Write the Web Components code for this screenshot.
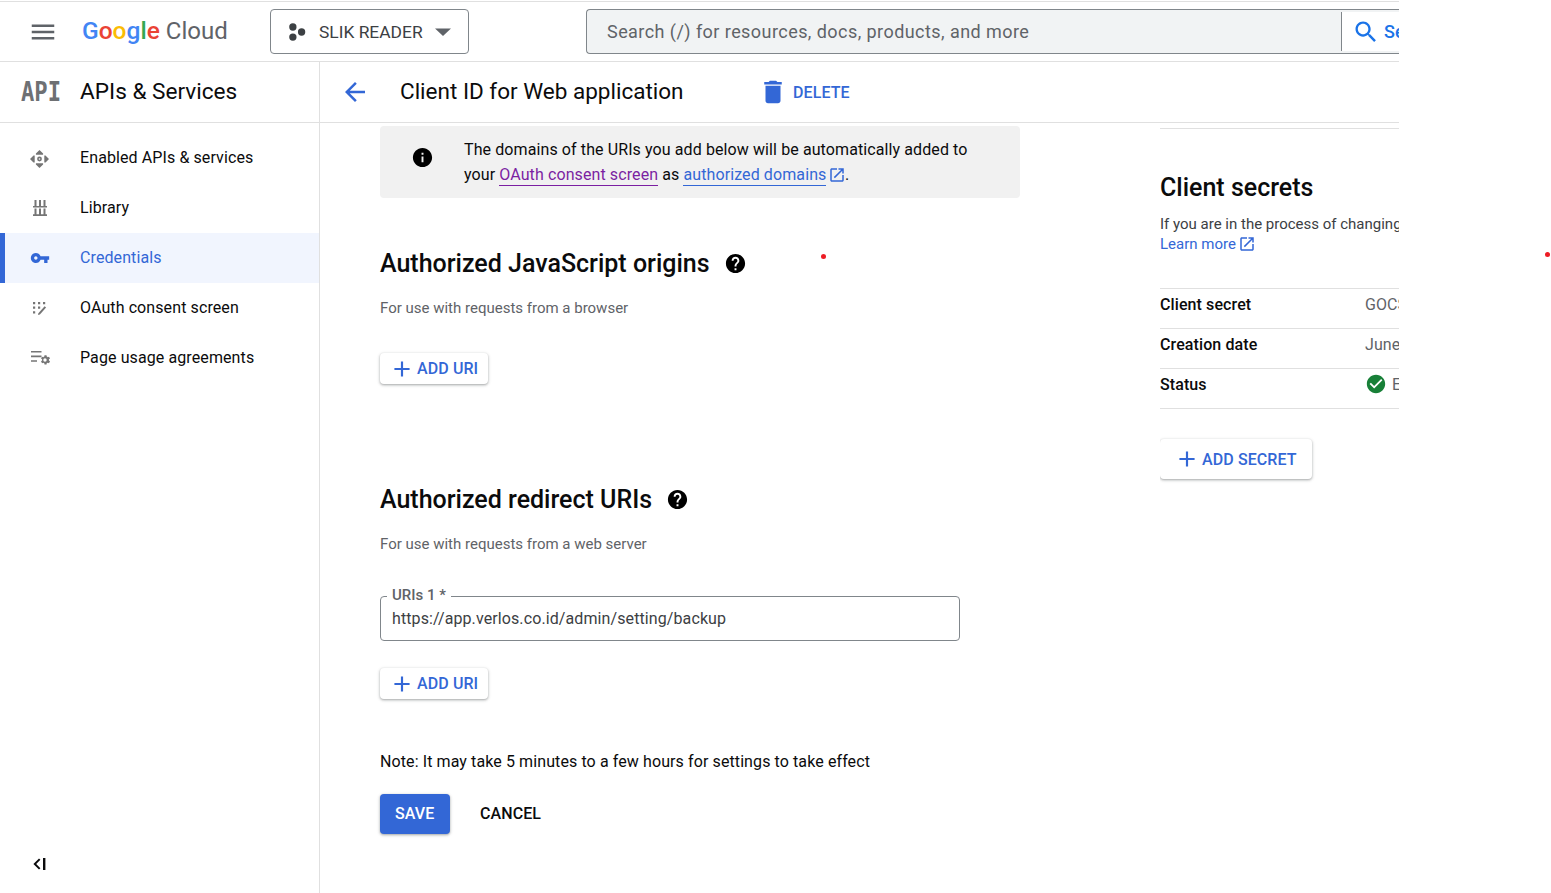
<!DOCTYPE html>
<html lang="en">
<head>
<meta charset="utf-8">
<title>Client ID for Web application</title>
<style>
  html, body { margin: 0; padding: 0; background: #fff; height: 100%; overflow: hidden; }
  body { font-family: Roboto, "Liberation Sans", sans-serif; color: #0b0b0c; }
</style>
</head>
<body>
<gc-app>
  <gc-header slot="header"></gc-header>
  <gc-sidenav slot="nav">
    <gc-nav-item icon="apis" label="Enabled APIs &amp; services"></gc-nav-item>
    <gc-nav-item icon="library" label="Library"></gc-nav-item>
    <gc-nav-item icon="key" label="Credentials" active></gc-nav-item>
    <gc-nav-item icon="consent" label="OAuth consent screen"></gc-nav-item>
    <gc-nav-item icon="usage" label="Page usage agreements"></gc-nav-item>
  </gc-sidenav>
  <gc-pagebar slot="bar"></gc-pagebar>
  <gc-form slot="form"></gc-form>
  <gc-secrets slot="secrets"></gc-secrets>
</gc-app>
<gc-dot style="left:821px;top:254px"></gc-dot>
<gc-dot style="left:1545px;top:252px"></gc-dot>

<script>
const ICONS = {
  menu: '<path d="M3 18h18v-2H3v2zm0-5h18v-2H3v2zm0-7v2h18V6H3z"/>',
  back: '<path d="M20 11H7.83l5.59-5.59L12 4l-8 8 8 8 1.41-1.41L7.83 13H20v-2z"/>',
  trash: '<path d="M6 19c0 1.1.9 2 2 2h8c1.1 0 2-.9 2-2V7H6v12zM19 4h-3.5l-1-1h-5l-1 1H5v2h14V4z"/>',
  info: '<path d="M12 2C6.48 2 2 6.48 2 12s4.48 10 10 10 10-4.48 10-10S17.52 2 12 2zm1 15h-2v-6h2v6zm0-8h-2V7h2v2z"/>',
  help: '<path d="M12 2C6.48 2 2 6.48 2 12s4.48 10 10 10 10-4.48 10-10S17.52 2 12 2zm1 17h-2v-2h2v2zm2.07-7.75l-.9.92C13.45 12.9 13 13.5 13 15h-2v-.5c0-1.1.45-2.1 1.17-2.83l1.24-1.26c.37-.36.59-.86.59-1.41 0-1.1-.9-2-2-2s-2 .9-2 2H8c0-2.21 1.79-4 4-4s4 1.79 4 4c0 .88-.36 1.68-.93 2.25z"/>',
  add: '<path d="M19 13h-6v6h-2v-6H5v-2h6V5h2v6h6v2z"/>',
  open: '<path d="M19 19H5V5h7V3H5c-1.11 0-2 .9-2 2v14c0 1.1.89 2 2 2h14c1.1 0 2-.9 2-2v-7h-2v7zM14 3v2h3.59l-9.83 9.83 1.41 1.41L19 6.41V10h2V3h-7z"/>',
  check: '<path d="M12 2C6.48 2 2 6.48 2 12s4.48 10 10 10 10-4.48 10-10S17.52 2 12 2zm-2 15l-5-5 1.41-1.41L10 14.17l7.59-7.59L19 8l-9 9z"/>',
  search: '<path d="M15.5 14h-.79l-.28-.27C15.41 12.59 16 11.11 16 9.5 16 5.91 13.09 3 9.5 3S3 5.91 3 9.5 5.91 16 9.5 16c1.61 0 3.09-.59 4.23-1.57l.27.28v.79l5 4.99L20.49 19l-4.99-5zm-6 0C7.01 14 5 11.99 5 9.5S7.01 5 9.5 5 14 7.01 14 9.5 11.99 14 9.5 14z"/>',
  key: '<path d="M12.65 10C11.83 7.67 9.61 6 7 6c-3.31 0-6 2.69-6 6s2.69 6 6 6c2.61 0 4.83-1.67 5.65-4H17v4h4v-4h2v-4H12.65zM7 14c-1.1 0-2-.9-2-2s.9-2 2-2 2 .9 2 2-.9 2-2 2z"/>',
  drop: '<path d="M4 8.5l8 7.5 8-7.5z"/>',
  project: '<circle cx="7.5" cy="6.5" r="4"/><circle cx="7.5" cy="17.5" r="4"/><circle cx="17" cy="12" r="4"/>',
  apis: '<path d="M11.5 4l3.6 3.5v1.2H7.9V7.5zM11.5 22l-3.6-3.5v-1.2h7.2v1.2zM2 13l3.5-3.6h1.2v7.2H5.5zM21 13l-3.5 3.6h-1.2V9.4h1.2z"/><path fill-rule="evenodd" d="M11.5 10.6a2.4 2.4 0 1 0 0 4.8 2.4 2.4 0 0 0 0-4.8zm0 1.6a.8.8 0 1 1 0 1.6.8.8 0 0 1 0-1.6z"/>',
  library: '<path d="M6.5 4h2v6h-2zM11 4h2v6h-2zM15.5 4h2v6h-2zM5 10h14v1.6H5zM6.5 12.4h2v6h-2zM11 12.4h2v6h-2zM15.5 12.4h2v6h-2zM5 18.2h14V20H5z"/>',
  consent: '<path d="M5 6h2.2v2.2H5zM10 6h2.2v2.2H10zM15 6h2.2v2.2H15zM5 10.6h2.2v2.2H5zM10 10.6h2.2v2.2H10zM5 15.2h2.2v2.2H5z"/><path d="M10.4 17.2l6.2-7 1.5 1.3-6.2 7-1.9.4z"/>',
  usage: '<path d="M3 5h10.5v1.6H3zM3 9.6h10.5v1.6H3zM3 14.2h6v1.6H3z"/><g transform="translate(2.55,-.45) scale(.85)"><path d="M21.6 17.6l1.3 1-1.2 2.1-1.5-.6a5 5 0 0 1-1.2.7l-.2 1.6h-2.4l-.2-1.6a5 5 0 0 1-1.2-.7l-1.5.6-1.2-2.1 1.3-1a5 5 0 0 1 0-1.4l-1.3-1 1.2-2.1 1.5.6a5 5 0 0 1 1.2-.7l.2-1.6h2.4l.2 1.6a5 5 0 0 1 1.2.7l1.5-.6 1.2 2.1-1.3 1a5 5 0 0 1 0 1.4zM17 15a2 2 0 1 0 0 4 2 2 0 0 0 0-4z"/></g>',
  collapse: '<path d="M13 6.4L7.4 12l5.6 5.6 1.4-1.4-4.2-4.2 4.2-4.2zM17 6h2.4v12H17z"/>'
};

function define(name, css, html, render) {
  customElements.define(name, class extends HTMLElement {
    constructor() {
      super();
      this.attachShadow({ mode: "open" });
    }
    connectedCallback() {
      this.shadowRoot.innerHTML = "<style>" + css + "</style>" + (render ? render(this) : html);
    }
  });
}

define("gc-icon", `
  :host { display: inline-flex; flex: none; width: var(--size, 24px); height: var(--size, 24px); color: inherit; }
  svg { width: 100%; height: 100%; fill: currentColor; display: block; }
`, "", el => `<svg viewBox="0 0 24 24" aria-hidden="true">${ICONS[el.getAttribute("name")] || ""}</svg>`);

define("gc-dot", `
  :host { position: absolute; display: block; width: 5px; height: 5px; border-radius: 50%; background: #ed1c24; }
`, "");

define("gc-app", `
  :host { display: flex; flex-direction: column; width: 1399px; height: 892px; margin-top: 1px; border-top: 1px solid #e0e0e0; box-sizing: border-box; overflow: hidden; background: #fff; }
  .top { flex: none; }
  .body { flex: 1; display: flex; min-height: 0; }
  .nav { flex: none; width: 320px; display: flex; }
  .pane { flex: 1; min-width: 0; display: flex; flex-direction: column; }
  .bar { flex: none; }
  .content { flex: 1; display: flex; padding-left: 60px; min-height: 0; }
  .form { flex: none; width: 640px; margin-right: 140px; }
  .secrets { flex: 1; min-width: 0; overflow: hidden; }
`, `
  <div class="top"><slot name="header"></slot></div>
  <div class="body">
    <div class="nav"><slot name="nav"></slot></div>
    <div class="pane">
      <div class="bar"><slot name="bar"></slot></div>
      <div class="content">
        <div class="form"><slot name="form"></slot></div>
        <div class="secrets"><slot name="secrets"></slot></div>
      </div>
    </div>
  </div>
`);

define("gc-header", `
  :host { display: flex; align-items: center; height: 59px; border-bottom: 1px solid #e0e0e0; box-sizing: content-box; }
  .menu { color: #5f6368; margin-left: 28px; --size: 30px; }
  .logo { margin-left: 24px; width: 161px; font-size: 24.5px; line-height: 30px; font-weight: 500; white-space: nowrap; font-family: Roboto, sans-serif; margin-top: -2px; }
  .logo .b { color: #4285f4; } .logo .r { color: #ea4335; } .logo .y { color: #fbbc05; } .logo .g { color: #34a853; }
  .logo .cloud { color: #5f6368; margin-left: 6px; font-weight: 400; font-size: 24px; }
  .project { margin-left: 27px; width: 199px; height: 45px; box-sizing: border-box; border: 1px solid #80868b; border-radius: 4px; display: flex; align-items: center; padding-left: 15px; color: #3c4043; font-size: 17.4px; }
  .project .p { --size: 22px; margin-right: 11px; }
  .project .d { --size: 24px; color: #5f6368; margin-left: 8px; }
  .search { margin-left: 117px; flex: 1; height: 45px; box-sizing: border-box; border: 1px solid #80868b; border-right: 0; border-radius: 4px 0 0 4px; background: #f1f3f4; display: flex; align-items: stretch; overflow: hidden; }
  .q { flex: 1; display: flex; align-items: center; padding-left: 20px; color: #5f6368; font-size: 18px; letter-spacing: .44px; white-space: nowrap; }
  .go { flex: none; width: 58px; background: #fff; border-left: 1px solid #80868b; margin: 2px 0; display: flex; align-items: center; padding-left: 10px; box-sizing: border-box; color: #1a73e8; font-size: 18px; font-weight: 500; overflow: hidden; white-space: nowrap; }
  .go gc-icon { --size: 28px; margin-right: 4px; }
`, `
  <gc-icon class="menu" name="menu"></gc-icon>
  <div class="logo"><span class="b">G</span><span class="r">o</span><span class="y">o</span><span class="b">g</span><span class="g">l</span><span class="r">e</span><span class="cloud">Cloud</span></div>
  <div class="project"><gc-icon class="p" name="project"></gc-icon><span>SLIK READER</span><gc-icon class="d" name="drop"></gc-icon></div>
  <div class="search"><div class="q">Search (/) for resources, docs, products, and more</div><div class="go"><gc-icon name="search"></gc-icon><span>Search</span></div></div>
`);

define("gc-sidenav", `
  :host { display: flex; flex-direction: column; width: 320px; box-sizing: border-box; border-right: 1px solid #e0e0e0; }
  .head { height: 60px; flex: none; display: flex; align-items: center; border-bottom: 1px solid #e0e0e0; box-sizing: content-box; }
  .apiwrap { width: 80px; flex: none; box-sizing: border-box; padding-left: 21px; }
  .api { display: block; width: 49px; font-family: "DejaVu Sans Mono", monospace; font-weight: 700; font-size: 27px; line-height: 30px; color: #6e7073; transform: scaleX(.82); transform-origin: left center; }
  .title { font-size: 22.6px; white-space: nowrap; margin-top: -2px; }
  .items { padding-top: 10px; flex: 1; }
  .foot { flex: none; height: 56px; display: flex; align-items: flex-start; padding-left: 26px; --size: 24px; padding-top: 15px; box-sizing: border-box; }
`, `
  <div class="head"><div class="apiwrap"><span class="api">API</span></div><div class="title">APIs &amp; Services</div></div>
  <div class="items"><slot></slot></div>
  <div class="foot"><gc-icon name="collapse"></gc-icon></div>
`);

define("gc-nav-item", `
  :host { display: flex; align-items: center; height: 50px; box-sizing: border-box; font-size: 16px; letter-spacing: .1px; padding-left: 28px; white-space: nowrap; }
  :host([active]) { background: #f1f5fe; color: #3367d6; border-left: 5px solid #3367d6; padding-left: 23px; }
  span { margin-top: -2px; }
  gc-icon { --size: 24px; color: #757575; margin-right: 28px; }
  :host([active]) gc-icon { color: #3367d6; --size: 20px; margin-left: 2px; margin-right: 30px; }
`, "", el => `<gc-icon name="${el.getAttribute("icon")}"></gc-icon><span>${el.getAttribute("label").replace("&", "&amp;")}</span>`);

define("gc-pagebar", `
  :host { display: flex; align-items: center; height: 60px; border-bottom: 1px solid #e0e0e0; box-sizing: content-box; }
  .back { color: #3367d6; margin-left: 20px; --size: 30px; }
  h1 { margin: -2px 0 0 30px; font-size: 22.5px; font-weight: 400; width: 361px; white-space: nowrap; line-height: 30px; }
  .del { display: flex; align-items: center; color: #3367d6; font-size: 16px; font-weight: 500; letter-spacing: .1px; }
  .del gc-icon { --size: 30px; margin-right: 5px; margin-left: -3px; }
`, `
  <gc-icon class="back" name="back"></gc-icon>
  <h1>Client ID for Web application</h1>
  <div class="del"><gc-icon name="trash"></gc-icon><span>DELETE</span></div>
`);

define("gc-link", `
  :host { display: inline; color: var(--link, #3367d6); }
  span { border-bottom: 1px solid currentColor; padding-bottom: 1px; }
  gc-icon { --size: 18px; display: inline-block; vertical-align: -1px; margin: -3px -1.5px -3px 2px; color: #3367d6; }
`, "", el => `<span><slot></slot></span>${el.hasAttribute("external") ? '<gc-icon name="open"></gc-icon>' : ""}`);

define("gc-button", `
  :host { display: inline-flex; align-items: center; box-sizing: border-box; height: var(--h, 31px); padding: var(--pad, 0 10px 0 9px); border-radius: 4px; color: #3367d6; background: #fff; font-size: 16px; font-weight: 500; letter-spacing: .1px; white-space: nowrap; box-shadow: 0 1px 2px rgba(60,64,67,.3), 0 1px 3px 1px rgba(60,64,67,.15); }
  :host([primary]) { background: #3367d6; color: #fff; padding: 0 15.5px 2px 15px; }
  :host([flat]) { background: transparent; color: #0b0b0c; box-shadow: none; padding: 0 0 2px; }
  gc-icon { --size: 26px; margin-right: 2px; }
`, "", el => `${el.hasAttribute("plus") ? '<gc-icon name="add"></gc-icon>' : ""}<slot></slot>`);

define("gc-section-head", `
  :host { display: flex; align-items: center; height: 32px; font-size: 25px; font-weight: 500; white-space: nowrap; }
  gc-icon { --size: 23px; color: #000; margin-left: 14px; }
`, "", el => `<span><slot></slot></span><gc-icon name="help"></gc-icon>`);

define("gc-uri-field", `
  :host { display: block; position: relative; width: 580px; height: 45px; box-sizing: border-box; border: 1px solid #80868b; border-radius: 4px; }
  .value { height: 100%; display: flex; align-items: center; padding-left: 11px; font-size: 16px; color: #3c4043; letter-spacing: .1px; white-space: nowrap; }
  label { position: absolute; left: 6px; top: -10px; padding: 0 5px; background: #fff; font-size: 15px; line-height: 16px; font-weight: 500; color: #5f6368; }
`, "", el => `<label>${el.getAttribute("label")}</label><div class="value">${el.getAttribute("value")}</div>`);

define("gc-form", `
  :host { display: block; padding-top: 3px; }
  .info { display: flex; height: 72px; box-sizing: border-box; background: #f1f1f1; border-radius: 4px; font-size: 16px; letter-spacing: .1px; line-height: 25px; padding: 11px 40px 0 0; }
  .info > gc-icon { --size: 23px; color: #000; margin: 9px 30px 0 31px; }
  .sub { margin-top: 19px; height: 20px; font-size: 15px; line-height: 20px; color: #5f6368; }
  .first { margin-top: 49px; display: flex; }
  .second { margin-top: 99px; display: flex; }
  .bt1 { margin-top: 35px; }
  .field { margin-top: 42px; }
  .bt2 { margin-top: 27px; }
  .note { margin-top: 53px; height: 20px; font-size: 16px; letter-spacing: .1px; line-height: 20px; white-space: nowrap; }
  .actions { margin-top: 22px; display: flex; align-items: center; gap: 30px; --h: 40px; }
  .consent { --link: #7b1fa2; }
  .blk { display: flex; }
`, `
  <div class="info">
    <gc-icon name="info"></gc-icon>
    <div>The domains of the URIs you add below will be automatically added to your <gc-link class="consent">OAuth consent screen</gc-link> as <gc-link external>authorized domains</gc-link>.</div>
  </div>
  <div class="first"><gc-section-head>Authorized JavaScript origins</gc-section-head></div>
  <div class="sub">For use with requests from a browser</div>
  <div class="bt1 blk"><gc-button plus>ADD URI</gc-button></div>
  <div class="second"><gc-section-head>Authorized redirect URIs</gc-section-head></div>
  <div class="sub">For use with requests from a web server</div>
  <gc-uri-field class="field" label="URIs 1 *" value="https://app.verlos.co.id/admin/setting/backup"></gc-uri-field>
  <div class="bt2 blk"><gc-button plus>ADD URI</gc-button></div>
  <div class="note">Note: It may take 5 minutes to a few hours for settings to take effect</div>
  <div class="actions"><gc-button primary>SAVE</gc-button><gc-button flat>CANCEL</gc-button></div>
`);

define("gc-secrets", `
  :host { display: block; width: 300px; padding-top: 5px; }
  .rule { height: 1px; background: #e0e0e0; }
  h2 { margin: 43px 0 0; height: 32px; line-height: 32px; font-size: 25px; font-weight: 500; white-space: nowrap; }
  p { margin: 10px 0 0; font-size: 15px; line-height: 20px; color: #3c4043; white-space: nowrap; }
  .table { margin-top: 34px; border-top: 1px solid #e0e0e0; width: 239px; overflow: hidden; }
  .row { display: flex; align-items: center; height: 40px; padding-bottom: 9px; box-sizing: border-box; border-bottom: 1px solid #e0e0e0; font-size: 16px; letter-spacing: .1px; white-space: nowrap; }
  .row b { flex: none; width: 205px; font-weight: 500; }
  .row span { color: #5f6368; display: flex; align-items: center; }
  .row gc-icon { --size: 22px; color: #188038; margin-right: 5px; }
  .add { margin-top: 30px; --h: 40px; --pad: 0 15px 0 14px; display: flex; }
  .wrap { overflow: hidden; width: 239px; }
`, `
  <div class="rule"></div>
  <h2>Client secrets</h2>
  <div class="wrap"><p>If you are in the process of changing client secrets, you can manually rotate them.<br><gc-link external>Learn more</gc-link></p></div>
  <div class="table">
    <div class="row"><b>Client secret</b><span>GOCSPX-</span></div>
    <div class="row"><b>Creation date</b><span>June 3, 2024</span></div>
    <div class="row"><b>Status</b><span><gc-icon name="check"></gc-icon>Enabled</span></div>
  </div>
  <div class="add"><gc-button plus>ADD SECRET</gc-button></div>
`);
</script>
</body>
</html>
